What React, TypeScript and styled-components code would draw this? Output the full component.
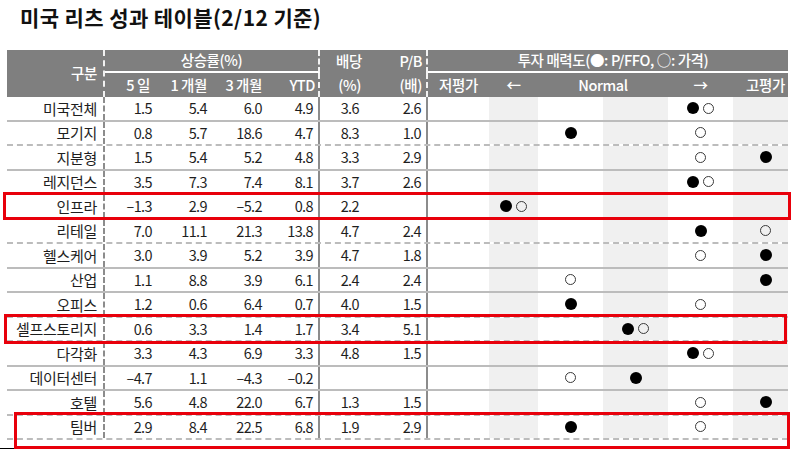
import React from 'react'
import styled, {createGlobalStyle, css} from 'styled-components'

/* Layout constants */
const COLS = '98px 50px 55px 55px 55px 54px 54px 61px 49px 65px 65px 65px 65px'
const SHADED = [false, true, false, true, false, true]

type Line = 'solid' | 'dashed'

interface ReitRow {
    label: string
    values: string[]
    div: string
    pb: string
    marks: string[]
    line: Line
}

const ROWS: ReitRow[] = [
    {label: '미국전체', values: ['1.5', '5.4', '6.0', '4.9'], div: '3.6', pb: '2.6', marks: ['', '', '', '', '●○', ''], line: 'solid'},
    {label: '모기지', values: ['0.8', '5.7', '18.6', '4.7'], div: '8.3', pb: '1.0', marks: ['', '', '●', '', '○', ''], line: 'dashed'},
    {label: '지분형', values: ['1.5', '5.4', '5.2', '4.8'], div: '3.3', pb: '2.9', marks: ['', '', '', '', '○', '●'], line: 'solid'},
    {label: '레지던스', values: ['3.5', '7.3', '7.4', '8.1'], div: '3.7', pb: '2.6', marks: ['', '', '', '', '●○', ''], line: 'dashed'},
    {label: '인프라', values: ['–1.3', '2.9', '–5.2', '0.8'], div: '2.2', pb: '', marks: ['', '●○', '', '', '', ''], line: 'dashed'},
    {label: '리테일', values: ['7.0', '11.1', '21.3', '13.8'], div: '4.7', pb: '2.4', marks: ['', '', '', '', '●', '○'], line: 'dashed'},
    {label: '헬스케어', values: ['3.0', '3.9', '5.2', '3.9'], div: '4.7', pb: '1.8', marks: ['', '', '', '', '○', '●'], line: 'solid'},
    {label: '산업', values: ['1.1', '8.8', '3.9', '6.1'], div: '2.4', pb: '2.4', marks: ['', '', '○', '', '', '●'], line: 'solid'},
    {label: '오피스', values: ['1.2', '0.6', '6.4', '0.7'], div: '4.0', pb: '1.5', marks: ['', '', '●', '', '○', ''], line: 'dashed'},
    {label: '셀프스토리지', values: ['0.6', '3.3', '1.4', '1.7'], div: '3.4', pb: '5.1', marks: ['', '', '', '●○', '', ''], line: 'dashed'},
    {label: '다각화', values: ['3.3', '4.3', '6.9', '3.3'], div: '4.8', pb: '1.5', marks: ['', '', '', '', '●○', ''], line: 'solid'},
    {label: '데이터센터', values: ['–4.7', '1.1', '–4.3', '–0.2'], div: '', pb: '', marks: ['', '', '○', '●', '', ''], line: 'solid'},
    {label: '호텔', values: ['5.6', '4.8', '22.0', '6.7'], div: '1.3', pb: '1.5', marks: ['', '', '', '', '○', '●'], line: 'dashed'},
    {label: '팀버', values: ['2.9', '8.4', '22.5', '6.8'], div: '1.9', pb: '2.9', marks: ['', '', '●', '', '○', ''], line: 'dashed'},
]

const HIGHLIGHTS = [
    {left: 3, top: 192, width: 788, height: 28},
    {left: 4, top: 314, width: 783, height: 30},
    {left: 14, top: 412, width: 776, height: 37},
]

const GlobalStyle = createGlobalStyle`
  body {
    margin: 0;
    background: #fff;
  }
  * {
    box-sizing: border-box;
  }
`

const Page = styled.div`
  position: relative;
  width: 792px;
  height: 452px;
  overflow: hidden;
  font-family: 'Noto Sans CJK KR', 'Noto Sans', sans-serif;
  color: #1e1e1e;
`

const Title = styled.h1`
  margin: 0;
  height: 50px;
  padding: 4px 0 0 20px;
  font-size: 21px;
  font-weight: 700;
  line-height: 27px;
  letter-spacing: 0.4px;
  color: #111;
`

const Table = styled.div`
  margin-left: 7px;
  width: 781px;
  overflow: hidden;
`

const Head = styled.div`
  display: grid;
  grid-template-columns: ${COLS};
  grid-template-rows: 23px 24px;
  background: #7f7f7f;
  color: #fff;
  font-size: 14.5px;
  font-weight: 500;
  line-height: 1;
  letter-spacing: -0.4px;
`

const HeadCell = styled.div<{$col: string; $row: string; $align?: string; $pr?: number; $divider?: boolean; $underline?: boolean}>`
  grid-column: ${p => p.$col};
  grid-row: ${p => p.$row};
  display: flex;
  align-items: center;
  justify-content: ${p => p.$align ?? 'center'};
  padding-right: ${p => p.$pr ?? 0}px;
  white-space: nowrap;
  ${p => p.$divider && css`border-right: 2px dashed rgba(255, 255, 255, 0.9);`}
  ${p => p.$underline && css`border-bottom: 2px solid #fff;`}
`

const Row = styled.div<{$line: Line}>`
  display: grid;
  grid-template-columns: ${COLS};
  height: 24.5px;
  border-bottom: 2px ${p => p.$line} #bcbcbc;
  font-size: 14.5px;
  line-height: 1;
  letter-spacing: -0.6px;
`

const Label = styled.div`
  display: flex;
  align-items: center;
  justify-content: flex-end;
  padding-right: 6px;
  font-size: 15px;
  letter-spacing: -0.3px;
  border-right: 2px dashed #8c8c8c;
`

const Num = styled.div<{$pr: number; $edge?: boolean}>`
  display: flex;
  align-items: center;
  justify-content: flex-end;
  padding-right: ${p => p.$pr}px;
  ${p => p.$edge && css`border-right: 2px solid #8c8c8c;`}
`

const Slot = styled.div<{$shade: boolean}>`
  display: flex;
  align-items: center;
  justify-content: center;
  gap: 4px;
  background: ${p => (p.$shade ? '#f0f0f0' : 'transparent')};
`

const Dot = styled.span<{$filled: boolean}>`
  display: block;
  border-radius: 50%;
  ${p => p.$filled
    ? css`
      width: 12px;
      height: 12px;
      background: #000;
    `
    : css`
      width: 11px;
      height: 11px;
      border: 1.5px solid #3a3a3a;
    `}
`

const FootRule = styled.div`
  margin-top: 8px;
  width: 790px;
  height: 1px;
  background: #000;
`

const Highlight = styled.div`
  position: absolute;
  border: 3px solid #e8000b;
  pointer-events: none;
`

const VALUE_PAD = [3, 3, 3, 5]

const Marks: React.FC<{text: string}> = ({text}) => (
    <>
        {text.split('').map((c, i) => <Dot key={i} $filled={c === '●'}/>)}
    </>
)

const ReitTable: React.FC = () => {
    return <Table>
        <Head>
            <HeadCell $col="1" $row="1 / 3" $align="flex-end" $pr={6} $divider>구분</HeadCell>
            <HeadCell $col="2 / 6" $row="1" $divider $underline>상승률(%)</HeadCell>
            <HeadCell $col="2" $row="2" $align="flex-end" $pr={5}>5 일</HeadCell>
            <HeadCell $col="3" $row="2" $align="flex-end" $pr={3}>1 개월</HeadCell>
            <HeadCell $col="4" $row="2" $align="flex-end" $pr={3}>3 개월</HeadCell>
            <HeadCell $col="5" $row="2" $align="flex-end" $pr={3} $divider>YTD</HeadCell>
            <HeadCell $col="6" $row="1" $align="flex-end" $pr={12}>배당</HeadCell>
            <HeadCell $col="6" $row="2" $align="flex-end" $pr={13}>(%)</HeadCell>
            <HeadCell $col="7" $row="1" $align="flex-end" $pr={4} $divider>P/B</HeadCell>
            <HeadCell $col="7" $row="2" $align="flex-end" $pr={4} $divider>(배)</HeadCell>
            <HeadCell $col="8 / 14" $row="1" $underline>투자 매력도(●: P/FFO, ○: 가격)</HeadCell>
            <HeadCell $col="8" $row="2">저평가</HeadCell>
            <HeadCell $col="9" $row="2">←</HeadCell>
            <HeadCell $col="10 / 12" $row="2">Normal</HeadCell>
            <HeadCell $col="12" $row="2">→</HeadCell>
            <HeadCell $col="13" $row="2">고평가</HeadCell>
        </Head>
        {ROWS.map(row => (
            <Row key={row.label} $line={row.line}>
                <Label>{row.label}</Label>
                {row.values.map((v, i) => (
                    <Num key={i} $pr={VALUE_PAD[i]} $edge={i === 3}>{v}</Num>
                ))}
                <Num $pr={15}>{row.div}</Num>
                <Num $pr={5} $edge>{row.pb}</Num>
                {row.marks.map((m, i) => (
                    <Slot key={i} $shade={SHADED[i]}><Marks text={m}/></Slot>
                ))}
            </Row>
        ))}
    </Table>
}

const App: React.FC = () => {
    return <Page>
        <GlobalStyle/>
        <Title>미국 리츠 성과 테이블(2/12 기준)</Title>
        <ReitTable/>
        <FootRule/>
        {HIGHLIGHTS.map((h, i) => <Highlight key={i} style={h}/>)}
    </Page>
}

export default App
